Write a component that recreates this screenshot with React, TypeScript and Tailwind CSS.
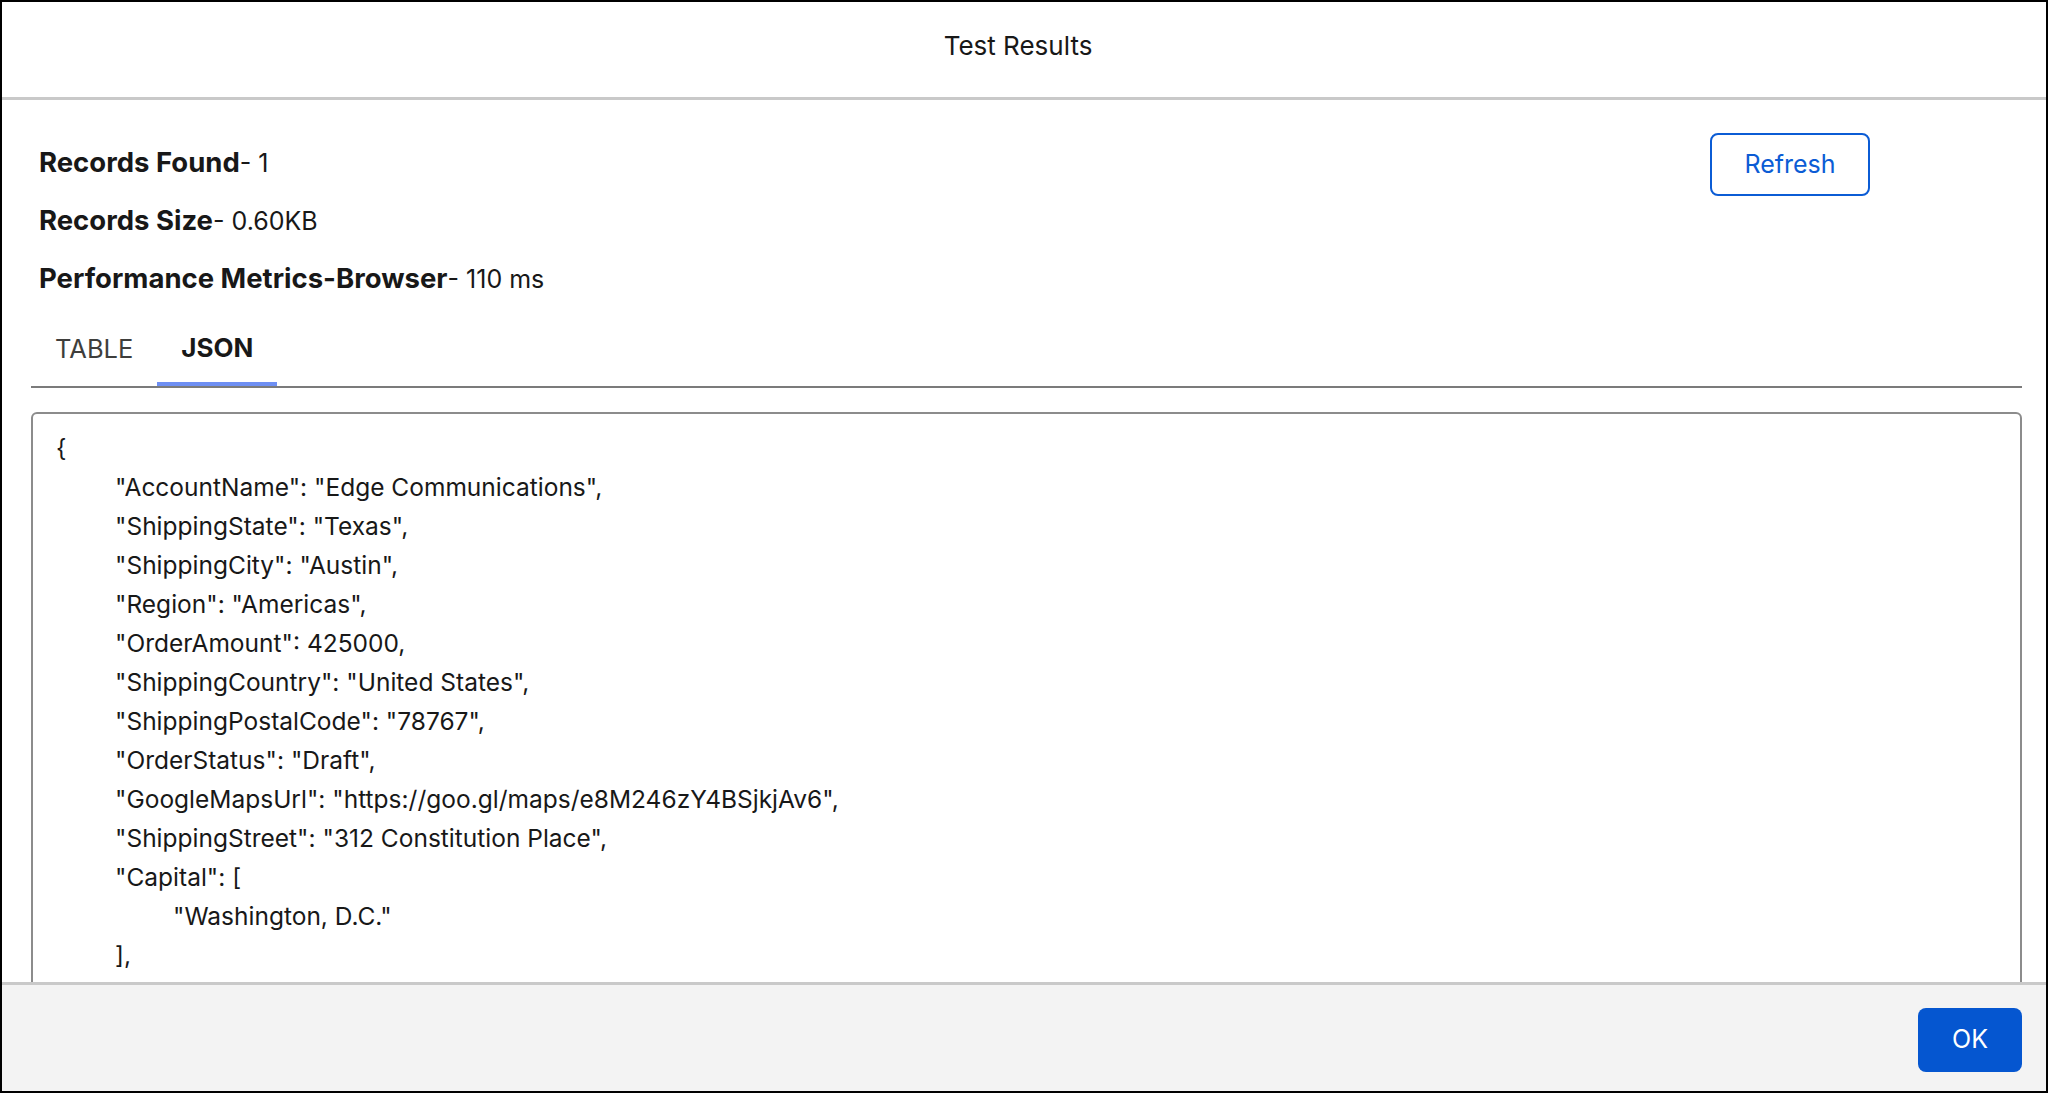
import React from 'react';

type JsonLine = { text: string; level: number };

const jsonLines: JsonLine[] = [
  { text: '{', level: 0 },
  { text: '"AccountName": "Edge Communications",', level: 1 },
  { text: '"ShippingState": "Texas",', level: 1 },
  { text: '"ShippingCity": "Austin",', level: 1 },
  { text: '"Region": "Americas",', level: 1 },
  { text: '"OrderAmount": 425000,', level: 1 },
  { text: '"ShippingCountry": "United States",', level: 1 },
  { text: '"ShippingPostalCode": "78767",', level: 1 },
  { text: '"OrderStatus": "Draft",', level: 1 },
  { text: '"GoogleMapsUrl": "https://goo.gl/maps/e8M246zY4BSjkjAv6",', level: 1 },
  { text: '"ShippingStreet": "312 Constitution Place",', level: 1 },
  { text: '"Capital": [', level: 1 },
  { text: '"Washington, D.C."', level: 2 },
  { text: '],', level: 1 },
];

const indent = ['pl-0', 'pl-[59px]', 'pl-[117px]'];

const App = () => {
  return (
    <div
      className="h-screen w-full flex flex-col bg-white border-2 border-black text-[#181818] overflow-hidden"
      style={{ fontFamily: 'Inter, "Liberation Sans", sans-serif' }}
    >
      {/* Header */}
      <div className="h-[98px] shrink-0 flex items-center justify-center border-b-[3px] border-[#c9c9c9]">
        <h2 className="text-[26px] -mt-[8px] ml-[-12px]">Test Results</h2>
      </div>

      {/* Body */}
      <div className="flex-1 min-h-0 overflow-hidden pl-[29px] pr-[24px] pt-[33px]">
        <div className="flex justify-between items-start">
          <div className="pl-[8px] pt-[12px] flex flex-col gap-[22px]">
            <p className="text-[25px] leading-[35px]">
              <span className="text-[27.5px] font-bold">Records Found</span>- 1
            </p>
            <p className="text-[25px] leading-[35px]">
              <span className="text-[27.5px] font-bold">Records Size</span>- 0.60KB
            </p>
            <p className="text-[25px] leading-[35px]">
              <span className="text-[27.5px] font-bold">Performance Metrics-Browser</span>- 110 ms
            </p>
          </div>
          <button className="mr-[152px] h-[63px] w-[160px] rounded-[8px] border-2 border-[#0b5cd5] text-[#0b5cd5] text-[25px] bg-white">
            Refresh
          </button>
        </div>

        {/* Tabs */}
        <div className="mt-[17px] flex border-b-2 border-[#7b7b7b]">
          <div className="px-[24px] h-[72px] pb-[2px] flex items-center text-[25.5px] text-[#3e3e3c]">TABLE</div>
          <div className="px-[24px] h-[72px] pb-[2px] flex items-center text-[26px] font-bold border-b-4 border-[#6e8ff3] -mb-[2px]">
            JSON
          </div>
        </div>

        {/* JSON box */}
        <div className="mt-[24px] rounded-[6px] border-2 border-[#8c8c8c] pl-[23px] pt-[15px] pb-[80px]">
          {jsonLines.map((line, i) => (
            <div key={i} className={`text-[24.5px] leading-[39px] whitespace-pre ${indent[line.level]}`}>
              {line.text}
            </div>
          ))}
        </div>
      </div>

      {/* Footer */}
      <div className="h-[109px] shrink-0 bg-[#f3f3f3] border-t-[3px] border-[#c9c9c9] flex items-center justify-end pr-[24px]">
        <button className="h-[64px] w-[104px] rounded-[8px] bg-[#0556d0] text-white text-[25px] mt-[4px]">OK</button>
      </div>
    </div>
  );
};

export default App;
